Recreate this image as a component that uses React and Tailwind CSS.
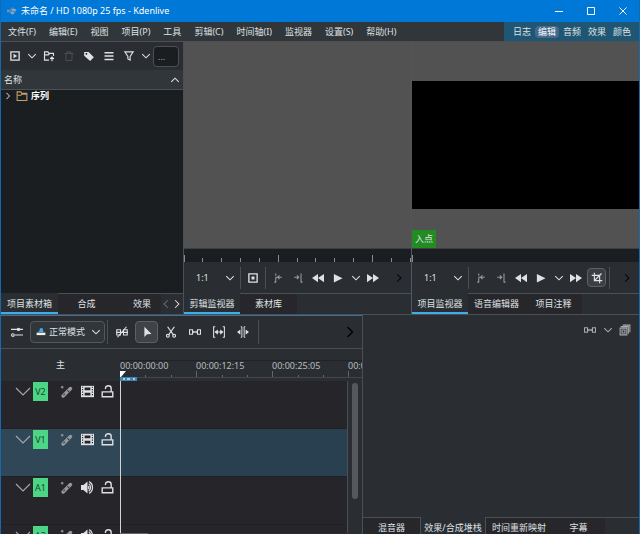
import { useState } from 'react';
import clsx from 'clsx';

// stroke icons share one 16x16 box
const paths = {
  down: <path d="M3 5.500 8 10.500l5-5" />,
  up: <path d="M3 10.500 8 5.500l5 5" />,
  right: <path d="M5.500 3 10.500 8l-5 5" />,
  left: <path d="M10.500 3 5.500 8l5 5" />,
  box: (
    <>
      <path d="M2.500 2.500h11v11h-11z" strokeWidth="1.800" />
      <path d="M6 5v6l5-3z" fill="currentColor" stroke="none" />
    </>
  ),
  zone: (
    <>
      <path d="M2.500 2.500h11v11h-11z" strokeWidth="1.800" />
      <path d="M6 6h4v4H6z" fill="currentColor" stroke="none" />
    </>
  ),
  folderAdd: (
    <>
      <path d="M8 13.500H2v-11h4.500l1.500 2h6v3.500" strokeWidth="1.500" />
      <path d="M2 6.500h5L8.500 5M12 15V9.500M9.500 12 12 9.500l2.500 2.500" strokeWidth="1.500" />
    </>
  ),
  trash: <path d="M2 4.500h12M5.500 4.500v-2h5v2M4 4.500v9.500h8V4.500" strokeWidth="1.300" />,
  tag: (
    <path
      fillRule="evenodd"
      d="M1.500 2.500h6l7 7-5 5-8-7zM4.500 4a1.200 1.200 0 1 0 .01 0z"
      fill="currentColor"
      stroke="none"
    />
  ),
  list: <path d="M2 3.500h12M2 8h12M2 12.500h12" strokeWidth="2" />,
  filter: <path d="M2.500 2.500h11L9.500 8.500v5l-3-1.500V8.500z" strokeWidth="1.500" />,
  setIn: <path d="M5 2v3M5 7v7M5 7h8M10 4.500 7.500 7l2.500 2.500M3 13.500h2" />,
  setOut: <path d="M12 2v12M3 7h6M6.500 4.500 9 7 6.500 9.500M12 13.500h2" />,
  rewind: <path d="M8 2.500v11L0 8zM16 2.500v11L8 8z" fill="currentColor" stroke="none" />,
  forward: <path d="M0 2.500v11L8 8zM8 2.500v11L16 8z" fill="currentColor" stroke="none" />,
  play: <path d="M2.500 2.500v11.500L14 8.200z" fill="currentColor" stroke="none" />,
  crop: <path d="M4.500 1v10.500H15M1 4.500h10.500V15M5 11l9-9" strokeWidth="1.500" />,
  sliders: (
    <>
      <path d="M0 4.500h16M5 12h11" strokeWidth="1.500" />
      <circle cx="10" cy="4.500" r="2.300" fill="currentColor" stroke="none" />
      <circle cx="2.500" cy="12" r="1.800" />
    </>
  ),
  mix: (
    <>
      <path d="M1 5h5v7H1zM10 5h5v7h-5zM0 8.500h16" />
      <path d="M2 15 14 1" strokeWidth="1.500" />
    </>
  ),
  pointer: <path d="M4.500 1v13.500l3.500-3.500 6-.5z" fill="currentColor" stroke="none" />,
  cut: (
    <>
      <path d="M3.500 1 11 11.500M12.500 1 5 11.500" strokeWidth="1.600" />
      <circle cx="3.800" cy="13" r="1.900" strokeWidth="1.500" />
      <circle cx="12.200" cy="13" r="1.900" strokeWidth="1.500" />
    </>
  ),
  spacer: (
    <>
      <path d="M.7 5h4v6h-4zM11.300 5h4v6h-4z" strokeWidth="1.400" />
      <path d="M5 8h6M6.500 6.500v3M9.500 6.500v3" strokeWidth="1.300" />
    </>
  ),
  fit: (
    <>
      <path d="M3 1H.8v14H3M13 1h2.200v14H13M3 8h10" strokeWidth="1.400" />
      <path d="M2 8l4.500-3.500v7zM14 8 9.500 4.500v7z" fill="currentColor" stroke="none" />
    </>
  ),
  slip: (
    <>
      <path d="M5 1h1.500v14H5M11 1H9.500v14H11" strokeWidth="1.300" />
      <path d="M4.500 4.500v7L0 8zM11.500 4.500v7L16 8z" fill="currentColor" stroke="none" />
    </>
  ),
  copies: (
    <>
      <path d="M5 1.500h9.500V11M3 4v-.500h9.500V13M1.500 5.500h9v9h-9z" />
      <path d="M4 8h4v4H4z" />
    </>
  ),
  wand: (
    <>
      <path d="m3.500 12.500 8.500-8.500" strokeWidth="4" strokeLinecap="round" />
      <path d="m8.500 6 2 2M4 11.500l1.500-1.500" stroke="#26252a" strokeWidth="1.200" />
      <path d="M2.500 1v3M1 2.500h3" strokeWidth="1.300" />
    </>
  ),
  film: (
    <>
      <path d="M0 1h16v14H0z" fill="currentColor" stroke="none" />
      <path d="M4.500 3h7v3.500h-7zM4.500 9.500h7V13h-7z" fill="#26252a" stroke="none" />
      <path d="M2 2v12M14 2v12" stroke="#26252a" strokeDasharray="1.500 1.500" />
    </>
  ),
  lock: <path d="M1.500 8.500h13v6h-13zM5.500 5V4c0-4 7-4 7 0v4.500" strokeWidth="1.700" />,
  speaker: (
    <>
      <path d="M0 5h3l5-4.500v15L3 11H0z" fill="currentColor" stroke="none" />
      <path d="M9.500 3.500c3 2 3 7 0 9M10 .8c5.500 3 5.500 11.400 0 14.400M9.500 6v4" strokeWidth="1.500" />
    </>
  ),
  tree: (
    <>
      <path d="M1.500 14V2.500h5l1.500 2h6.500V14z" />
      <path d="M1.500 7h5L8 5.500h6" />
    </>
  ),
};

function Icon({ name, size = 'size-3', className }) {
  return (
    <svg
      viewBox="0 0 16 16"
      fill="none"
      stroke="currentColor"
      strokeWidth="1.4"
      aria-hidden="true"
      className={clsx('shrink-0', size, className)}
    >
      {paths[name]}
    </svg>
  );
}

function IconButton({ name, label, size, className = 'w-5' }) {
  return (
    <button type="button" aria-label={label} className={clsx('flex shrink-0 items-center justify-center', className)}>
      <Icon name={name} size={size} />
    </button>
  );
}

function Separator({ className }) {
  return <span className={clsx('w-px shrink-0 bg-[#4b5055]', className)} />;
}

function Tabs({ items, initial, bottom, children }) {
  const [active, setActive] = useState(initial);
  return (
    <div role="tablist" className={clsx('flex shrink-0 overflow-hidden bg-[#2a2e32]', bottom ? 'h-[17px]' : 'h-[21px]')}>
      {items.map(({ label, width }) => (
        <button
          key={label}
          type="button"
          role="tab"
          aria-selected={active === label}
          onClick={() => setActive(label)}
          className={clsx(
            'h-[21px] shrink-0 whitespace-nowrap text-center',
            width,
            active === label
              ? clsx('bg-[#2a2e32]', bottom ? 'border-x border-[#4b5055]' : 'border-b-2 border-[#3daee9] pt-0.5')
              : 'border-t border-[#4b5055] bg-[#27262b]'
          )}
        >
          {label}
        </button>
      ))}
      <div className="flex flex-1 items-center border-t border-[#4b5055]">{children}</div>
    </div>
  );
}

const menus = ['文件(F)', '编辑(E)', '视图', '项目(P)', '工具', '剪辑(C)', '时间轴(I)', '监视器', '设置(S)', '帮助(H)'];
const layouts = ['日志', '编辑', '音频', '效果', '颜色'];

function TitleBar() {
  return (
    <header className="flex h-[22px] shrink-0 items-center bg-[#0078d7] pl-1.5 text-white">
      <svg viewBox="0 0 16 16" className="size-2.5" aria-hidden="true">
        <path d="M0 6h8v4H0z" fill="#7c92a5" />
        <path d="m9 1 6 7-6 7-6-7z" fill="#4f87b5" />
        <path d="M8 5h6v2H8zM6 10h5v2H6z" fill="#a9bccb" />
      </svg>
      <h1 className="ml-1 flex-1">未命名 / HD 1080p 25 fps - Kdenlive</h1>
      <button type="button" aria-label="最小化" className="flex w-8 justify-center">
        <svg viewBox="0 0 8 8" className="size-2" stroke="white"><path d="M0 4.500h8" /></svg>
      </button>
      <button type="button" aria-label="最大化" className="flex w-8 justify-center">
        <svg viewBox="0 0 8 8" className="size-2" stroke="white" fill="none"><path d="M.5.5h7v7h-7z" /></svg>
      </button>
      <button type="button" aria-label="关闭" className="flex w-8 justify-center">
        <svg viewBox="0 0 8 8" className="size-2" stroke="white"><path d="m.5.5 7 7m0-7-7 7" /></svg>
      </button>
    </header>
  );
}

function MenuBar() {
  return (
    <div className="flex h-5 shrink-0 border-b border-[#4b5055] bg-[#31363b]">
      <nav className="flex flex-1 items-center gap-[13px] pl-[7px]">
        {menus.map((m) => (
          <button key={m} type="button" className="whitespace-nowrap">{m}</button>
        ))}
      </nav>
      <div className="flex items-center bg-[#1f5673] pl-1.5 pr-1">
        {layouts.map((l) => (
          <button
            key={l}
            type="button"
            className={clsx('mr-px w-6 rounded-sm text-center', l === '编辑' && 'bg-[#44698a] text-white')}
          >
            {l}
          </button>
        ))}
      </div>
    </div>
  );
}

function ProjectBin() {
  return (
    <section className="flex min-h-0 min-w-0 flex-col">
      <div className="flex h-7 shrink-0 items-center pl-1">
        <IconButton name="box" label="添加素材" />
        <IconButton name="down" label="更多" className="w-3.5" />
        <IconButton name="folderAdd" label="创建文件夹" />
        <span className="flex text-[#4b5055]"><IconButton name="trash" label="删除" /></span>
        <IconButton name="tag" label="标签" />
        <IconButton name="list" label="视图模式" />
        <IconButton name="filter" label="过滤" />
        <IconButton name="down" label="过滤选项" className="w-3.5" />
        <input
          aria-label="搜索"
          placeholder="..."
          className="h-[21px] min-w-0 flex-1 rounded-sm border border-[#4b5055] bg-[#1b1e20] px-1 placeholder:text-[#a0a3a5]"
        />
        <span className="w-1" />
      </div>
      <div className="flex h-5 shrink-0 items-center justify-between border-b border-[#4b5055] bg-[#31363b] pr-0.5 pl-[3px]">
        <span>名称</span>
        <Icon name="up" />
      </div>
      <div className="flex min-h-0 flex-1 flex-col bg-[#1b1e20]">
        <div className="flex h-3 items-center gap-[3px] pl-0.5 font-bold text-white">
          <Icon name="right" size="size-2.5" />
          <Icon name="tree" size="size-3" className="text-[#c99f6d]" />
          <span>序列</span>
        </div>
      </div>
      <Tabs
        initial="项目素材箱"
        items={[
          { label: '项目素材箱', width: 'w-[57px]' },
          { label: '合成', width: 'w-[57px]' },
          { label: '效果', width: 'w-[46px] pl-2' },
        ]}
      >
        <span className="flex text-[#6b7075]"><IconButton name="left" label="上一个" className="w-2.5" /></span>
        <IconButton name="right" label="下一个" className="w-3" />
      </Tabs>
    </section>
  );
}

function MonitorRuler({ ticks }) {
  return (
    <div className="h-3.5 shrink-0 overflow-hidden border-t border-[#3c4043] bg-[#1b1e20]">
      <svg className="h-full w-full" aria-hidden="true" stroke="#8a8d90">
        {ticks.map((x, i) => (
          <line key={x} x1={x + 0.5} x2={x + 0.5} y1={i % 5 === 0 ? 6 : 9} y2="13" />
        ))}
      </svg>
    </div>
  );
}

function MonitorControls({ id, project }) {
  return (
    <div className="flex h-[31px] shrink-0 items-center">
      <label htmlFor={id} className="hidden">缩放</label>
      <div className="relative w-14">
        <select id={id} className="block h-5 w-full appearance-none bg-transparent pl-3 leading-5">
          <option>1:1</option>
        </select>
        <Icon name="down" className="pointer-events-none absolute top-1 right-1" />
      </div>
      <Separator className="h-[22px]" />
      {!project && (
        <>
          <IconButton name="zone" label="区域" className="w-6" />
          <Separator className="h-[22px]" />
        </>
      )}
      <span className="flex pl-0.5 text-[#9a9ea1]">
        <IconButton name="setIn" label="设置入点" />
        <IconButton name="setOut" label="设置出点" />
      </span>
      <IconButton name="rewind" label="快退" />
      <IconButton name="play" label="播放" />
      <IconButton name="down" label="播放选项" className="w-4" />
      <IconButton name="forward" label="快进" className="w-[18px]" />
      {project && (
        <>
          <IconButton
            name="crop"
            label="编辑模式"
            className="ml-0.5 h-[19px] w-[19px] rounded-sm border border-[#5d6266] bg-[#3b3f43]"
          />
          <Separator className="ml-[3px] h-[22px]" />
        </>
      )}
      <span className="ml-auto flex pr-1 text-black">
        <IconButton name="right" label="更多" className="w-4" />
      </span>
    </div>
  );
}

function ClipMonitor() {
  return (
    <section className="flex min-h-0 min-w-0 flex-col border-l border-[#4b5055]">
      <div className="flex-1 bg-[#525252]" />
      <MonitorRuler ticks={[0, 18, 37, 56, 75, 94, 113, 131, 150, 169, 188, 207, 226]} />
      <MonitorControls id="clip-zoom" />
      <Tabs
        initial="剪辑监视器"
        items={[{ label: '剪辑监视器', width: 'w-14' }, { label: '素材库', width: 'w-[57px]' }]}
      />
    </section>
  );
}

function ProjectMonitor() {
  return (
    <section className="flex min-h-0 min-w-0 flex-col border-l border-[#50585f]">
      <div className="relative flex flex-1 items-center bg-[#525252]">
        <div className="aspect-video w-full bg-black" />
        <span className="absolute bottom-0 left-0 bg-[#228b22] px-[3px] py-0.5 leading-[14px]">入点</span>
      </div>
      <MonitorRuler ticks={[0]} />
      <MonitorControls id="project-zoom" project />
      <Tabs
        initial="项目监视器"
        items={[
          { label: '项目监视器', width: 'w-14' },
          { label: '语音编辑器', width: 'w-[57px]' },
          { label: '项目注释', width: 'w-[57px]' },
        ]}
      />
    </section>
  );
}

function TimelineToolbar() {
  return (
    <div className="flex h-[33px] shrink-0 items-center border-b border-[#4b5055] pl-1">
      <IconButton name="sliders" label="轨道设置" className="w-6" />
      <div className="relative ml-px flex h-[22px] w-[75px] items-center rounded-sm border border-[#55595d] bg-[#31363b]">
        <svg viewBox="0 0 16 16" className="pointer-events-none absolute left-[5px] size-2.5" aria-hidden="true">
          <path d="M1 9h14v4H1z" fill="#eff0f1" />
          <path d="M6 2h5v5H6zM4 6h8v2H4z" fill="#3daee9" />
        </svg>
        <select aria-label="编辑模式" className="h-5 w-full appearance-none bg-transparent pl-[18px] leading-5">
          <option>正常模式</option>
        </select>
        <Icon name="down" className="pointer-events-none absolute right-0.5" />
      </div>
      <Separator className="mx-[2px] h-6" />
      <IconButton name="mix" label="混合" className="w-6" />
      <IconButton
        name="pointer"
        label="选择工具"
        className="mx-px h-[22px] w-[23px] rounded-sm border border-[#5d6266] bg-[#3f4347]"
      />
      <IconButton name="cut" label="切割工具" className="w-6" />
      <IconButton name="spacer" label="间隔工具" className="w-6" />
      <IconButton name="fit" label="适合缩放" className="w-6" />
      <IconButton name="slip" label="滑移工具" className="w-6" />
      <Separator className="ml-[3px] h-6" />
      <span className="ml-auto flex pr-1 text-black">
        <IconButton name="right" label="更多工具" size="size-4" className="w-4" />
      </span>
    </div>
  );
}

const tracks = [
  { name: 'V2', kind: 'film' },
  { name: 'V1', kind: 'film', active: true },
  { name: 'A1', kind: 'speaker' },
  { name: 'A2', kind: 'speaker' },
];

function TrackHeader({ name, kind, active }) {
  return (
    <div
      className={clsx(
        'flex h-12 shrink-0 items-start border-b border-[#202124] pt-px pl-3.5',
        active ? 'bg-[#2f4756]' : 'bg-[#26252a]'
      )}
    >
      <button type="button" aria-label={`折叠 ${name}`} className="flex h-[19px] items-center text-[#a4a7a9]">
        <svg viewBox="0 0 16 10" className="h-2.5 w-4" fill="none" stroke="currentColor" aria-hidden="true">
          <path d="m1 1 7 7 7-7" strokeWidth="1.200" />
        </svg>
      </button>
      <span className="ml-0.5 h-[19px] w-[15px] bg-[#4bd584] text-center leading-[19px] text-[#1c4a30]">{name}</span>
      <div className="ml-[9px] flex h-[19px] items-center">
        <span className="flex text-[#93999d]"><IconButton name="wand" label="轨道效果" size="size-3.5" /></span>
        <IconButton name={kind} label={kind === 'film' ? '隐藏轨道' : '静音轨道'} size="size-[13px]" />
        <IconButton name="lock" label="锁定轨道" size="size-[13px]" />
      </div>
    </div>
  );
}

function TimeRuler() {
  return (
    <div className="mt-[11px] h-[21px] shrink-0 overflow-hidden border-t border-[#202326]">
      <div className="flex h-2.5 leading-[10px] text-[#b9bcbe]">
        {['00:00:00:00', '00:00:12:15', '00:00:25:05', '00:00:37:20'].map((t) => (
          <span key={t} className="w-[76px] shrink-0">{t}</span>
        ))}
      </div>
      <svg className="h-2.5 w-full" aria-hidden="true" stroke="#63676b">
        {[0, 25, 51, 76, 102, 127, 152, 178, 203, 228].map((x, i) => (
          <line key={x} x1={x + 0.5} x2={x + 0.5} y1={i % 3 === 0 ? 0 : 4} y2="7" />
        ))}
        <line x1="0" x2="100%" y1="6.500" y2="6.500" stroke="#43474b" />
        <path d="M0 6h17v4H0z" fill="#3f86b5" stroke="none" />
        <path d="M3 7h2v2H3zM7 7h3v2H7zM13 7h2v2h-2z" fill="#a8cde3" stroke="none" />
        <path d="M0 0h6L1 6H0z" fill="#fff" stroke="none" />
      </svg>
    </div>
  );
}

function Timeline() {
  return (
    <section className="flex min-h-0 min-w-0 flex-col overflow-hidden border-t border-r border-t-[#3f6f94] border-r-[#4b5055]">
      <TimelineToolbar />
      <div className="flex min-h-0 flex-1">
        <div className="flex w-[119px] shrink-0 flex-col overflow-hidden">
          <div className="flex h-8 shrink-0 items-center justify-center">主</div>
          {tracks.map((t) => (
            <TrackHeader key={t.name} {...t} />
          ))}
        </div>
        <div className="flex min-w-0 flex-1 flex-col overflow-hidden">
          <TimeRuler />
          <div className="flex min-h-0 flex-1">
            <div className="flex min-w-0 flex-1 flex-col overflow-hidden border-x border-l-[#d0d2d3] border-r-[#4b5055]">
              {tracks.map((t) => (
                <div
                  key={t.name}
                  className={clsx('h-12 shrink-0 border-b border-[#202124]', t.active ? 'bg-[#294050]' : 'bg-[#26252a]')}
                />
              ))}
            </div>
            <div className="flex w-3.5 shrink-0 justify-center pt-0.5">
              <div className="h-[77%] w-1.5 rounded-full bg-[#55595c]" />
            </div>
          </div>
          <div className="h-px w-7 shrink-0 bg-[#63676b]" />
        </div>
      </div>
    </section>
  );
}

function EffectStack() {
  return (
    <section className="flex min-h-0 min-w-0 flex-col overflow-hidden">
      <div className="flex h-[30px] shrink-0 items-center justify-end pr-[5px] text-[#a9acae]">
        <IconButton name="spacer" label="对比效果" />
        <IconButton name="down" label="选项" className="w-4" />
        <IconButton name="copies" label="保存效果堆栈" className="w-[18px]" />
      </div>
      <div className="flex-1" />
      <Tabs
        bottom
        initial="效果/合成堆栈"
        items={[
          { label: '混音器', width: 'w-[57px]' },
          { label: '效果/合成堆栈', width: 'w-[66px]' },
          { label: '时间重新映射', width: 'w-[66px]' },
          { label: '字幕', width: 'w-[53px]' },
        ]}
      />
    </section>
  );
}

export default function App() {
  return (
    <div className="flex h-screen flex-col overflow-hidden border-x border-[#1768ac] bg-[#2a2e32] font-['Noto_Sans','Noto_Sans_CJK_SC',sans-serif] text-[9px] leading-3 text-[#dfe1e2]">
      <TitleBar />
      <MenuBar />
      <main className="grid min-h-0 flex-1 grid-rows-[272fr_220fr]">
        <div className="grid min-h-0 grid-cols-[182fr_228fr_228fr]">
          <ProjectBin />
          <ClipMonitor />
          <ProjectMonitor />
        </div>
        <div className="grid min-h-0 grid-cols-[362fr_276fr] border-t border-[#4b5055]">
          <Timeline />
          <EffectStack />
        </div>
      </main>
    </div>
  );
}
